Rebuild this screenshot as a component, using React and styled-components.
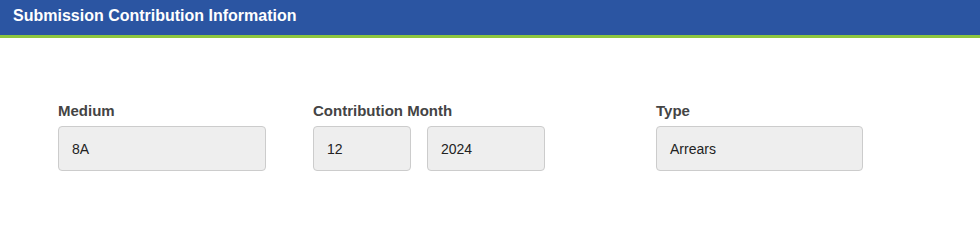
import React from 'react'
import styled, { createGlobalStyle } from 'styled-components'

const GlobalStyle = createGlobalStyle`
body {
  margin: 0;
  background: #fff;
  font-family: "Liberation Sans", Arial, sans-serif;
}
`

const Panel = styled.section`
width: 980px;
height: 216px;
background: #fff;
`

const Header = styled.div`
height: 35px;
background: #2b55a2;
border-bottom: 3px solid #8dc63f;
display: flex;
align-items: center;
padding-left: 13px;
box-sizing: content-box;
`

const Title = styled.h2`
margin: 0 0 3px;
font-size: 16px;
font-weight: bold;
color: #fff;
`

const Body = styled.div`
display: flex;
padding: 64px 0 0 58px;
`

const Field = styled.div`
display: flex;
flex-direction: column;
margin-right: ${(p) => p.gap || 0}px;
`

const Label = styled.label`
font-size: 15px;
line-height: 17px;
font-weight: bold;
color: #444;
margin-bottom: 7px;
`

const Inputs = styled.div`
display: flex;
gap: 16px;
`

const Box = styled.div`
width: ${(p) => p.w}px;
height: 45px;
box-sizing: border-box;
display: flex;
align-items: center;
padding-left: 13px;
background: #eee;
border: 1px solid #ccc;
border-radius: 4px;
font-size: 14px;
color: #222;
`

const App = () => (
    <Panel>
        <GlobalStyle />
        <Header>
            <Title>Submission Contribution Information</Title>
        </Header>
        <Body>
            <Field gap={47}>
                <Label>Medium</Label>
                <Box w={208}>8A</Box>
            </Field>
            <Field gap={111}>
                <Label>Contribution Month</Label>
                <Inputs>
                    <Box w={98}>12</Box>
                    <Box w={118}>2024</Box>
                </Inputs>
            </Field>
            <Field>
                <Label>Type</Label>
                <Box w={207}>Arrears</Box>
            </Field>
        </Body>
    </Panel>
)

export default App
